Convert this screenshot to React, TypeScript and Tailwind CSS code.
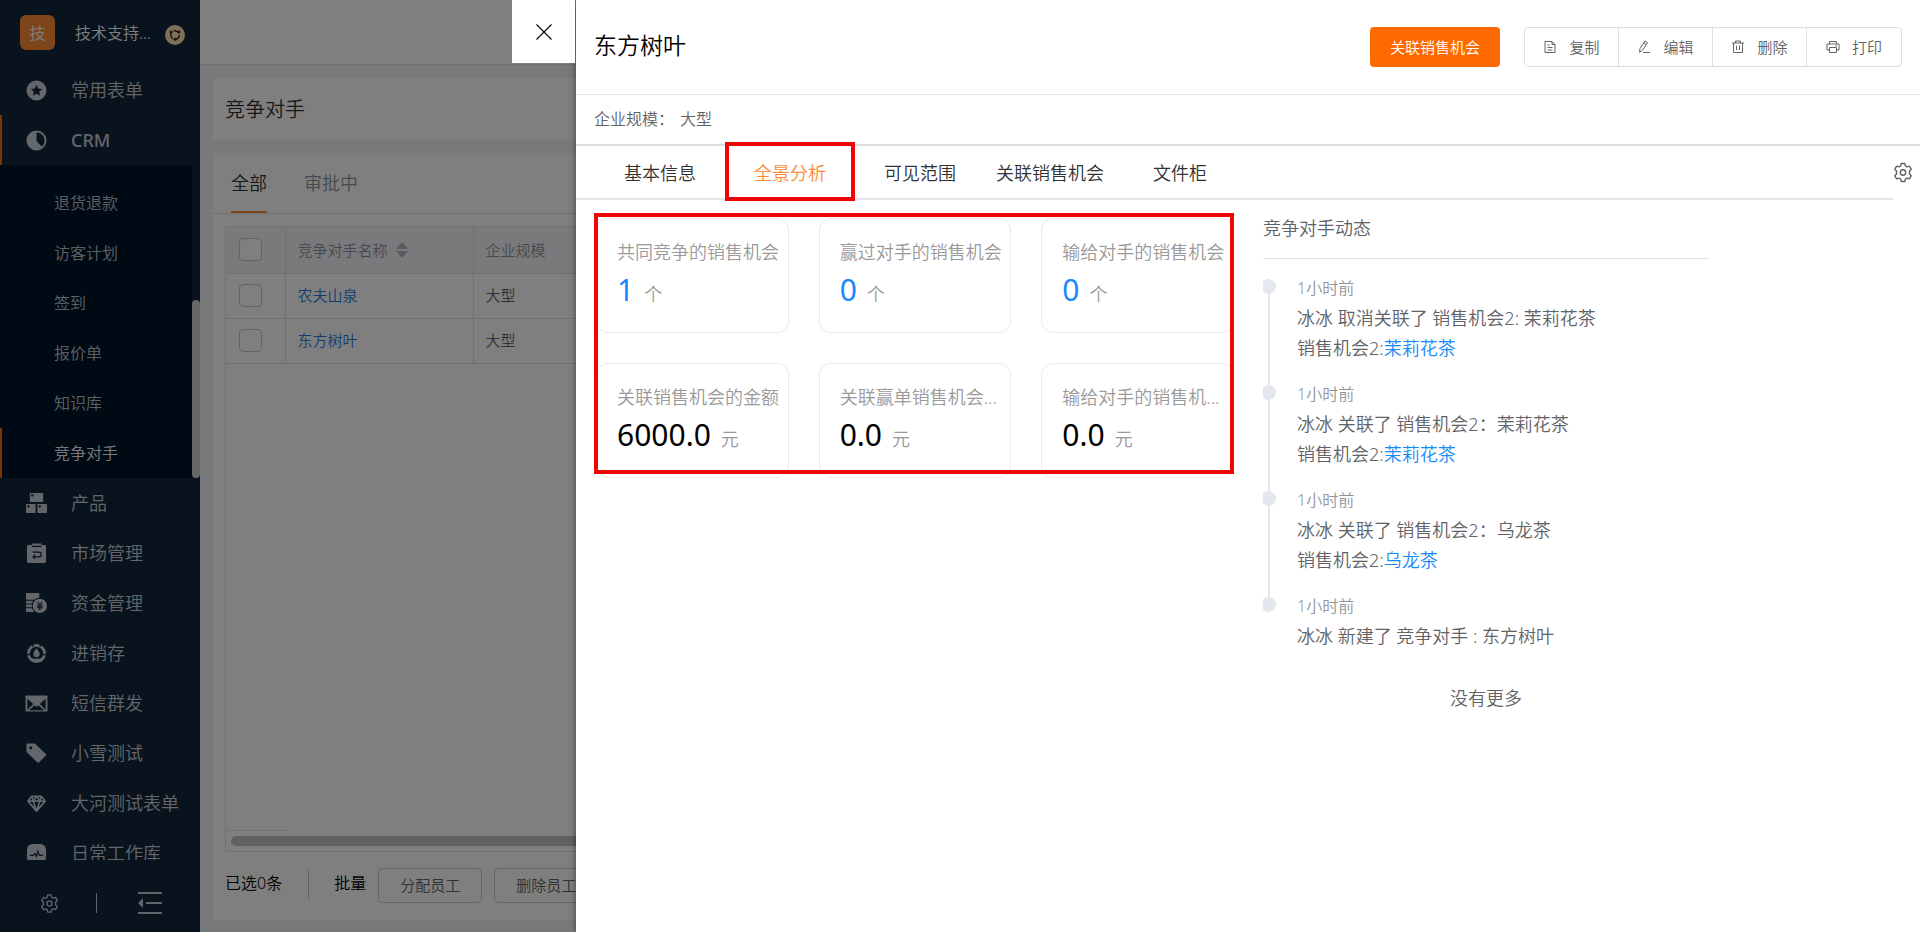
import { ReactNode } from "react";

interface NavItem {
  label: string;
  icon: ReactNode;
}

interface StatCard {
  label: string;
  value: string;
  unit: string;
  link?: boolean;
}

interface TimelineEntry {
  time: string;
  text: string;
  field?: string;
  target?: string;
}

const topNav: NavItem[] = [
  {
    label: "常用表单",
    icon: (
      <path
        fillRule="evenodd"
        d="M11 .5a10.500 10.500 0 1 0 0 21 10.500 10.500 0 0 0 0-21zm0 4.700l1.800 3.800 4.100.500-3 2.900.700 4.100-3.600-2-3.600 2 .700-4.100-3-2.900 4.100-.500z"
      />
    ),
  },
  {
    label: "CRM",
    icon: (
      <>
        <circle cx="11" cy="11" r="9.500" fill="none" stroke="currentColor" strokeWidth="2" />
        <path d="M11 1a10 10 0 1 0 6.500 17.600L11 11.500z" />
      </>
    ),
  },
];

const subNav = ["退货退款", "访客计划", "签到", "报价单", "知识库", "竞争对手"];

const bottomNav: NavItem[] = [
  {
    label: "产品",
    icon: (
      <>
        <path d="M4.500 0h13a.500.500 0 0 1 .500.500v9h-14v-9z" />
        <path d="M.500 11.500H10V21H.500a.500.500 0 0 1-.500-.500V12zM12 11.500h9.500a.500.500 0 0 1 .500.500v8.500a.500.500 0 0 1-.500.500H12z" />
        <path d="M6.500 1v3M5 2.500h3M2.500 12.500v3M1 14h3M14.500 12.500v3M13 14h3" stroke="#12263d" strokeWidth="1" />
      </>
    ),
  },
  {
    label: "市场管理",
    icon: (
      <>
        <path d="M2.500 2H6V.500h10V2h3.500A1.500 1.500 0 0 1 21 3.500v16a1.500 1.500 0 0 1-1.500 1.500h-17A1.500 1.500 0 0 1 1 19.500v-16A1.500 1.500 0 0 1 2.500 2z" />
        <path d="M6 3.500h10M7 9.500h6.500a2.500 2.500 0 0 1 0 5H7.500M9.500 12.500l-2 2 2 2" fill="none" stroke="#12263d" strokeWidth="1.300" />
      </>
    ),
  },
  {
    label: "资金管理",
    icon: (
      <>
        <path d="M0 0h14v7H0zM0 8h7v3H0zM0 12h7v3H0zM0 16h8v4H0z" />
        <circle cx="14.500" cy="13.500" r="8.500" fill="#12263d" />
        <circle cx="14.500" cy="13.500" r="7.500" />
        <path d="M12 9.500l2.500 3 2.500-3M14.500 12.500V18M11.500 13.500h6M11.500 15.500h6" fill="none" stroke="#12263d" strokeWidth="1.200" />
      </>
    ),
  },
  {
    label: "进销存",
    icon: (
      <>
        <circle cx="11" cy="11" r="8.500" fill="none" stroke="currentColor" strokeWidth="3" />
        <path d="M11 5.500c2 2.500 3.300 4.200 3.300 6a3.300 3.300 0 0 1-6.600 0c0-1.800 1.300-3.500 3.300-6z" />
        <path d="M7 0v4M15 0v4M0 12h4M18 12h4" stroke="#12263d" strokeWidth="1.500" />
        <path d="M4 15.500c4 1.500 10 1.500 14 0l-2 4H6z" />
      </>
    ),
  },
  {
    label: "短信群发",
    icon: (
      <>
        <rect x="-.5" y="2.500" width="23" height="17" rx="1" />
        <path d="M1.500 6l6 5.500-6 6zM20.500 6l-6 5.500 6 6zM3 18l6-5 2 1.500 2-1.500 6 5z" fill="#12263d" />
      </>
    ),
  },
  {
    label: "小雪测试",
    icon: (
      <path
        fillRule="evenodd"
        d="M1.500.500h7.800l11.500 11c.500.500.500 1 0 1.500l-7.300 7.300c-.500.500-1 .500-1.500 0L.500 9.500v-8a1 1 0 0 1 1-1zM5 3.500a1.600 1.600 0 1 0 0 3.200 1.600 1.600 0 0 0 0-3.200z"
      />
    ),
  },
  {
    label: "大河测试表单",
    icon: (
      <path
        d="M6 3.500h10l4 5L11 19 2 8.500zM2 8.500h18M6 3.500l1.500 5L11 19l3.500-10.500 1.500-5M7.500 8.500L11 3.500l3.500 5"
        fill="none"
        stroke="currentColor"
        strokeWidth="1.700"
        strokeLinejoin="round"
      />
    ),
  },
  {
    label: "日常工作库",
    icon: (
      <>
        <path d="M8 1h6c5 0 7 2.500 7 7v6c0 5-2 7-7 7H8c-5 0-7-2-7-7V8c0-4.500 2-7 7-7z" />
        <path d="M4 13h3.500l2-2 1.500 3 1.500-5.500L14 13h4" fill="none" stroke="#12263d" strokeWidth="1.200" />
      </>
    ),
  },
];

const competitors = [
  { name: "农夫山泉", scale: "大型" },
  { name: "东方树叶", scale: "大型" },
];

const detailTabs = ["基本信息", "全景分析", "可见范围", "关联销售机会", "文件柜"];

const stats: StatCard[] = [
  { label: "共同竞争的销售机会", value: "1", unit: "个", link: true },
  { label: "赢过对手的销售机会", value: "0", unit: "个", link: true },
  { label: "输给对手的销售机会", value: "0", unit: "个", link: true },
  { label: "关联销售机会的金额", value: "6000.0", unit: "元" },
  { label: "关联赢单销售机会...", value: "0.0", unit: "元" },
  { label: "输给对手的销售机...", value: "0.0", unit: "元" },
];

const timeline: TimelineEntry[] = [
  { time: "1小时前", text: "冰冰 取消关联了 销售机会2: 茉莉花茶", field: "销售机会2:", target: "茉莉花茶" },
  { time: "1小时前", text: "冰冰 关联了 销售机会2：茉莉花茶", field: "销售机会2:", target: "茉莉花茶" },
  { time: "1小时前", text: "冰冰 关联了 销售机会2：乌龙茶", field: "销售机会2:", target: "乌龙茶" },
  { time: "1小时前", text: "冰冰 新建了 竞争对手 : 东方树叶" },
];

const actions: NavItem[] = [
  { label: "复制", icon: <path d="M2 1.500h7l3 3v8H2zM9 1.500v3h3M4.500 5h2M4.500 7.500h5M4.500 10h5" /> },
  { label: "编辑", icon: <path d="M3 8.500L8 1l2.500 1.700-5 7.500-3 2zM6.800 2.800l2.500 1.700M6 12.500h7" /> },
  { label: "删除", icon: <path d="M1 3h12M4.500 3V1h5v2M2.500 3v9.500h9V3M5.500 5.500V10M8.500 5.500V10" /> },
  { label: "打印", icon: <path d="M3.500 4V1.500h7V4M3.500 10H1V4h12v6h-2.500M3.500 7.500h7v5h-7zM9.500 6h1.500" /> },
];

function Gear({ className = "" }: { className?: string }) {
  return (
    <svg viewBox="0 0 20 20" className={className} fill="none" stroke="currentColor" strokeWidth="1.400" strokeLinejoin="round">
      <path d="M8.200 1h3.600l.600 2.400 1.500.900 2.400-.700 1.900 3.100-1.700 1.800v3l1.700 1.800-1.900 3.100-2.400-.700-1.500.900-.600 2.400H8.200l-.600-2.400-1.500-.900-2.400.700-1.900-3.100 1.700-1.800v-3L1.800 6.700l1.900-3.100 2.400.700 1.500-.900z" />
      <circle cx="10" cy="10" r="2.700" />
    </svg>
  );
}

function NavRow({ item, active = false }: { item: NavItem; active?: boolean }) {
  return (
    <a
      href="#"
      className={`flex h-[50px] shrink-0 items-center border-l-2 pl-6 text-lg ${
        active ? "border-[#ff6a00] font-medium text-[#c9ced6]" : "border-transparent text-[#c6ccd4]"
      }`}
    >
      <svg viewBox="0 0 22 22" className="mr-6 size-[21px] overflow-visible" fill="currentColor">
        {item.icon}
      </svg>
      <span>{item.label}</span>
    </a>
  );
}

function Sidebar() {
  return (
    <aside className="flex w-[200px] shrink-0 flex-col bg-[#12263d]">
      <div className="flex h-[65px] shrink-0 items-center pl-5">
        <span className="flex size-[35px] items-center justify-center rounded-md bg-[#ff8a35] text-base text-white">技</span>
        <span className="ml-5 w-20 whitespace-nowrap text-base text-white">技术支持...</span>
        <svg viewBox="0 0 20 20" className="ml-2.5 mt-1 size-5">
          <circle cx="10" cy="10" r="10" fill="#ffe0b5" />
          <circle cx="10" cy="10" r="4.200" fill="none" stroke="#3a2a18" strokeWidth="1.500" strokeDasharray="6 2.800" />
          <circle cx="6" cy="7" r="1.500" fill="#3a2a18" />
          <circle cx="14" cy="7" r="1.500" fill="#3a2a18" />
          <circle cx="10" cy="14.300" r="1.500" fill="#3a2a18" />
        </svg>
      </div>

      <nav className="flex min-h-0 flex-1 flex-col overflow-hidden">
        {topNav.map((item) => (
          <NavRow key={item.label} item={item} active={item.label === "CRM"} />
        ))}
        <div className="flex shrink-0">
          <div className="flex-1 bg-[#001529] pt-[13px]">
            {subNav.map((label) => (
              <a
                key={label}
                href="#"
                className={`flex h-[50px] items-center border-l-2 pl-[52px] text-base ${
                  label === "竞争对手" ? "border-[#ff6a00] text-[#f0f2f4]" : "border-transparent text-[#bdc3c9]"
                }`}
              >
                {label}
              </a>
            ))}
          </div>
          <div className="flex w-2 flex-col justify-end">
            <div className="h-[178px] rounded-full bg-[#cccccc]" />
          </div>
        </div>
        {bottomNav.map((item) => (
          <NavRow key={item.label} item={item} />
        ))}
      </nav>

      <div className="flex h-[72px] shrink-0 items-center pb-2.5 pl-10 pt-6 text-[#c3cad3]">
        <button type="button" aria-label="设置">
          <Gear className="size-[19px]" />
        </button>
        <span className="ml-[37px] h-5 w-px bg-current" />
        <button type="button" aria-label="收起菜单" className="ml-[41px]">
          <svg viewBox="0 0 24 22" className="h-[22px] w-6" fill="currentColor">
            <path d="M0 0h24v2H0zM8 10h16v2H8zM0 20h24v2H0zM0 11l5-5v10z" />
          </svg>
        </button>
      </div>
    </aside>
  );
}

function Checkbox({ label }: { label: string }) {
  return (
    <input
      type="checkbox"
      aria-label={label}
      className="ml-[13px] block size-[23px] appearance-none rounded-sm border border-[#c3c6cf] bg-white"
    />
  );
}

function ListPage() {
  return (
    <main className="flex min-w-0 flex-1 flex-col bg-[#f0f2f6]">
      <header className="h-[65px] shrink-0 border-b border-[#dcdfe6] bg-white" />
      <div className="flex min-h-0 flex-1 flex-col gap-[13px] p-[13px] pb-3">
        <h1 className="flex h-[62px] shrink-0 items-center bg-white px-3 pt-0.5 text-xl text-[#303133]">竞争对手</h1>

        <section className="flex min-h-0 flex-1 flex-col bg-white">
          <div className="flex h-[61px] shrink-0 gap-[37px] border-b border-[#dcdfe6] px-[18px] text-lg">
            <button type="button" className="border-b-2 border-[#ff8a2b] pt-0.5 text-[#303133]">
              全部
            </button>
            <button type="button" className="border-b-2 border-transparent pt-0.5 text-[#909399]">
              审批中
            </button>
          </div>

          <div className="ml-3 mt-3 flex min-h-0 flex-1 flex-col border-b border-l border-t border-[#e2e4ea]">
            <table className="w-full table-fixed border-collapse text-left text-[15px]">
              <thead>
                <tr className="h-[46px] border-b border-[#dfe1e8] bg-[#f5f5fa] text-[#909399]">
                  <th className="w-[59px] border-r border-[#dfe1e8] font-[350]">
                    <Checkbox label="全选" />
                  </th>
                  <th className="w-[188px] border-r border-[#dfe1e8] pl-3 font-[350]">
                    <span className="flex items-center gap-2">
                      竞争对手名称
                      <svg viewBox="0 0 12 16" className="h-4 w-3" fill="#b4b7be">
                        <path d="M6 0l6 7H0zM6 16l6-7H0z" />
                      </svg>
                    </span>
                  </th>
                  <th className="pl-3 font-[350]">企业规模</th>
                </tr>
              </thead>
              <tbody>
                {competitors.map((row) => (
                  <tr key={row.name} className="h-[45px] border-b border-[#dfe1e8] text-[#606266]">
                    <td className="border-r border-[#dfe1e8]">
                      <Checkbox label={row.name} />
                    </td>
                    <td className="border-r border-[#dfe1e8] pl-3">
                      <a href="#" className="text-[#2a7be0]">
                        {row.name}
                      </a>
                    </td>
                    <td className="pl-3">{row.scale}</td>
                  </tr>
                ))}
              </tbody>
            </table>
            <div className="mt-auto w-[61px] border-t border-[#e2e4ea]" />
            <div className="my-[5px] ml-[5px] h-2.5 rounded-full bg-[#c2c2c2]" />
          </div>

          <div className="flex h-[68px] shrink-0 items-center pb-0.5 pl-3 text-base text-black">
            <span className="pb-1">已选0条</span>
            <span className="ml-[26px] h-[30px] w-px bg-[#c8cad0]" />
            <span className="ml-[25px] pb-1">批量</span>
            <button type="button" className="ml-3 h-[35px] rounded-sm border border-[#c9ccd3] px-[21px] text-[15px] text-[#606266]">
              分配员工
            </button>
            <button type="button" className="ml-3 h-[35px] rounded-sm border border-[#c9ccd3] px-[21px] text-[15px] text-[#606266]">
              删除员工
            </button>
          </div>
        </section>
      </div>
    </main>
  );
}

function StatCards() {
  return (
    <div className="relative grid grid-cols-3 gap-[30px] pt-1">
      {stats.map((card) => (
        <div key={card.label} className="h-[115px] rounded-xl border border-[#ebebeb] pl-5 pt-[21px]">
          <div className="whitespace-nowrap text-lg leading-6 text-[#999999]">{card.label}</div>
          <div className="mt-1.5 flex items-baseline gap-2.5 leading-10">
            {card.link ? (
              <a href="#" className="text-3xl leading-10 font-normal text-[#1989fa]">
                {card.value}
              </a>
            ) : (
              <span className="text-3xl leading-10 font-normal text-black">{card.value}</span>
            )}
            <span className="text-lg leading-6 text-[#999999]">{card.unit}</span>
          </div>
        </div>
      ))}
      {/* Highlight frame */}
      <div className="pointer-events-none absolute -left-0.5 -top-px bottom-1 right-0 border-4 border-[#f00505]" />
    </div>
  );
}

function Timeline() {
  return (
    <section className="w-[34%] pr-1 pt-0.5">
      <h3 className="border-b border-[#e2e2e6] pb-[18px] text-lg leading-6 text-[#606266]">竞争对手动态</h3>
      <ol className="mt-5 overflow-hidden">
        {timeline.map((entry, i) => (
          <li key={i} className="-ml-0.5 flex gap-[21px]">
            <div className="flex w-[15px] flex-col items-center">
              <span className="size-[15px] shrink-0 rounded-full bg-[#e4e7ed]" />
              {i < timeline.length - 1 && <span className="w-0.5 flex-1 bg-[#e4e4ea]" />}
            </div>
            <div className={i < timeline.length - 1 ? "pb-[22px]" : ""}>
              <time className="block text-base leading-[18px] text-[#909399]">{entry.time}</time>
              <p className="mt-1.5 text-lg leading-[30px] text-[#606266]">{entry.text}</p>
              {entry.target && (
                <p className="text-lg leading-[30px] text-[#606266]">
                  {entry.field}
                  <a href="#" className="text-[#1989fa]">
                    {entry.target}
                  </a>
                </p>
              )}
            </div>
          </li>
        ))}
      </ol>
      <p className="mt-8 text-center text-lg leading-[30px] text-[#606266]">没有更多</p>
    </section>
  );
}

function DetailDrawer() {
  return (
    <div className="absolute inset-y-0 right-0 w-[70%] bg-white shadow-[0_0_6px_rgba(0,0,0,0.5)]">
      <button
        type="button"
        aria-label="关闭"
        className="absolute right-full top-0 mr-px flex size-[63px] items-center justify-center bg-white"
      >
        <svg viewBox="0 0 16 16" className="size-4" stroke="#111111" strokeWidth="1.300">
          <path d="M.500.500l15 15M15.500.500l-15 15" />
        </svg>
      </button>

      <header className="flex h-[95px] items-center border-b border-[#e4e4e6] px-[18px]">
        <h2 className="pb-1 text-[23px] leading-8 text-black">东方树叶</h2>
        <button type="button" className="ml-auto mr-6 h-10 rounded-sm bg-[#ff6a00] px-5 text-[15px] text-white">
          关联销售机会
        </button>
        <div className="flex divide-x divide-[#dcdfe6] rounded-sm border border-[#dcdfe6]">
          {actions.map((action) => (
            <button key={action.label} type="button" className="flex h-[38px] w-[94px] items-center justify-center gap-3 text-[15px] text-[#606266]">
              <svg viewBox="0 0 14 14" className="size-3.5" fill="none" stroke="currentColor">
                {action.icon}
              </svg>
              {action.label}
            </button>
          ))}
        </div>
      </header>

      <div className="flex h-[51px] items-center border-b-2 border-[#dddee0] pb-0.5 pl-[18px] text-base text-[#606266]">
        <span className="w-[86px]">企业规模：</span>
        <span>大型</span>
      </div>

      <div className="flex h-[54px] items-stretch">
        <div className="flex flex-1 border-b-2 border-[#e4e7ea] pl-[19px]">
          {detailTabs.map((tab) => (
            <button
              key={tab}
              type="button"
              className={`relative w-[130px] pt-0.5 text-lg ${tab === "全景分析" ? "text-[#ff8a33]" : "text-[#303133]"}`}
            >
              {tab}
              {tab === "全景分析" && (
                <span className="pointer-events-none absolute -bottom-[3px] -top-1 left-0 right-0 border-4 border-[#f00505]" />
              )}
            </button>
          ))}
        </div>
        <button type="button" aria-label="设置" className="w-[27px] pb-0.5 text-[#606266]">
          <Gear className="h-[21px] w-5" />
        </button>
      </div>

      <div className="flex items-start pl-5 pt-3.5">
        <div className="w-1/2 pr-6">
          <StatCards />
        </div>
        <div className="w-[5px] shrink-0" />
        <Timeline />
      </div>
    </div>
  );
}

export default function App() {
  return (
    <div className="relative flex h-screen overflow-hidden font-['Noto_Sans','Noto_Sans_CJK_SC',sans-serif] font-[350]">
      <Sidebar />
      <ListPage />
      <div className="absolute inset-0 bg-black/50" />
      <DetailDrawer />
    </div>
  );
}
